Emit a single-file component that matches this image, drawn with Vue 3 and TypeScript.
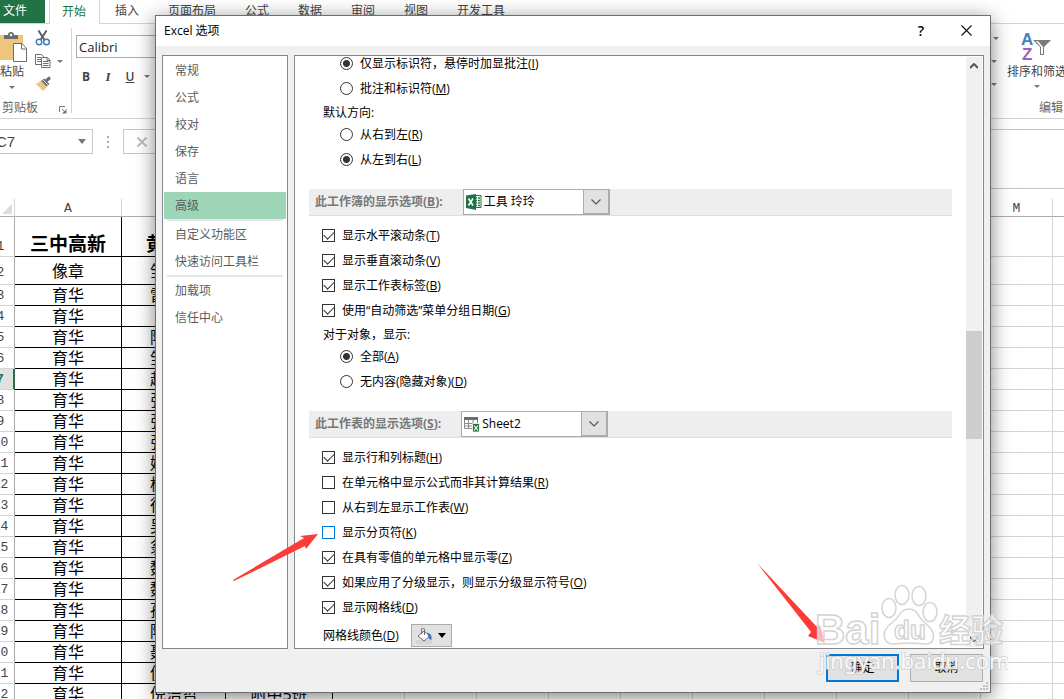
<script setup lang="ts">
import { ref } from 'vue'

interface Option {
  text: string
  hotkey: string
  checked: boolean
  focused?: boolean
}

interface SheetRow {
  n: number
  a: string
  b: string
  c: string
}

const tabs: string[] = ['插入', '页面布局', '公式', '数据', '审阅', '视图', '开发工具']

const navGroups: string[][] = [
  ['常规', '公式', '校对', '保存', '语言', '高级'],
  ['自定义功能区', '快速访问工具栏'],
  ['加载项', '信任中心'],
]
const activeNav = ref('高级')

const commentOptions: Option[] = [
  { text: '仅显示标识符，悬停时加显批注', hotkey: 'I', checked: true },
  { text: '批注和标识符', hotkey: 'M', checked: false },
]
const directionOptions: Option[] = [
  { text: '从右到左', hotkey: 'R', checked: false },
  { text: '从左到右', hotkey: 'L', checked: true },
]
const objectOptions: Option[] = [
  { text: '全部', hotkey: 'A', checked: true },
  { text: '无内容(隐藏对象)', hotkey: 'D', checked: false },
]
const workbookOptions = ref<Option[]>([
  { text: '显示水平滚动条', hotkey: 'T', checked: true },
  { text: '显示垂直滚动条', hotkey: 'V', checked: true },
  { text: '显示工作表标签', hotkey: 'B', checked: true },
  { text: '使用“自动筛选”菜单分组日期', hotkey: 'G', checked: true },
])
const sheetOptions = ref<Option[]>([
  { text: '显示行和列标题', hotkey: 'H', checked: true },
  { text: '在单元格中显示公式而非其计算结果', hotkey: 'R', checked: false },
  { text: '从右到左显示工作表', hotkey: 'W', checked: false },
  { text: '显示分页符', hotkey: 'K', checked: false, focused: true },
  { text: '在具有零值的单元格中显示零', hotkey: 'Z', checked: true },
  { text: '如果应用了分级显示，则显示分级显示符号', hotkey: 'O', checked: true },
  { text: '显示网格线', hotkey: 'D', checked: true },
])

const columns: string[] = ['A', 'B', 'C', 'D', 'E', 'F', 'G', 'H', 'I', 'J', 'K', 'L', 'M', 'N']
const secondColumn: string[] = [
  '黄', '邹', '雷', '', '陈', '邹', '赵', '张', '张', '张', '姚',
  '杨', '徐', '吴', '翁', '魏', '魏', '孙', '陈', '聂', '倪', '倪洁哲',
]
const rows: SheetRow[] = secondColumn.map((b, i) => ({
  n: i + 1,
  a: i === 0 ? '三中高新' : i === 1 ? '像章' : '育华',
  b,
  c: i === 21 ? '附中5班' : '',
}))
</script>

<template>
  <div class="app">
    <header class="tabs">
      <button class="tab file">文件</button>
      <button class="tab current">开始</button>
      <button v-for="t in tabs" :key="t" class="tab">{{ t }}</button>
    </header>

    <section class="ribbon">
      <div class="clipboard">
        <div class="paste">
          <svg width="29" height="32" viewBox="0 0 29 32" aria-hidden="true">
            <rect x="0" y="4" width="23" height="25" fill="#edc57c" />
            <path d="M4 8V4h4a3 3 0 0 1 6 0h4v4z" fill="#6d6d6d" />
            <circle cx="11" cy="4" r="1.2" fill="#fff" />
            <path d="M13.500 12.500h8.500l4.500 5v13h-13z" fill="#fff" stroke="#6d6d6d" />
            <path d="M21.500 12.500v5.500h5" fill="none" stroke="#6d6d6d" />
          </svg>
          <span class="big-label">粘贴</span>
          <i class="caret"></i>
        </div>
        <div class="small-tools">
          <svg width="16" height="16" viewBox="0 0 16 16" aria-hidden="true">
            <path d="M3.500.500 9.500 10M11.500.500 5.500 10" stroke="#5f5f5f" stroke-width="2" fill="none" />
            <circle cx="4" cy="12" r="2.800" fill="#fff" stroke="#3f78b5" stroke-width="1.400" />
            <circle cx="11.500" cy="12" r="2.800" fill="#fff" stroke="#3f78b5" stroke-width="1.400" />
          </svg>
          <span class="copy">
            <svg width="16" height="16" viewBox="0 0 16 16" aria-hidden="true">
              <path d="M.500 1.500h6l2 2v8h-8z" fill="#fff" stroke="#6d6d6d" />
              <path d="M2 4.500h4M2 6.500h4M2 8.500h4" stroke="#3f78b5" />
              <path d="M6.500 4.500h6l2.500 2.500v7.500h-8.500z" fill="#fff" stroke="#6d6d6d" />
              <path d="M12 4.500v3h3M8 8.500h5.500M8 10.500h5.500M8 12.500h5.500" stroke="#3f78b5" fill="none" />
            </svg>
            <i class="caret"></i>
          </span>
          <svg width="17" height="16" viewBox="0 0 17 16" aria-hidden="true">
            <path d="M1 8 6 5l6 6-4 4z" fill="#edc57c" />
            <path d="M6 5l3-2.500 5.500 5.500-3 2.500z" fill="#6d6d6d" />
            <path d="m11 5 4-3.500" stroke="#6d6d6d" stroke-width="3" />
            <path d="m7.500 3.500 6 6" stroke="#fff" stroke-width=".800" />
          </svg>
        </div>
        <span class="group-name">剪贴板</span>
        <svg class="launcher" width="8" height="8" viewBox="0 0 8 8" aria-hidden="true">
          <path d="M.500 6V.500H6M3 3l3 3" fill="none" stroke="#777" />
          <path d="M7.500 3v4.500H3z" fill="#777" />
        </svg>
      </div>

      <div class="font-group">
        <input class="font-name" type="text" value="Calibri" aria-label="字体" />
        <div class="styles">
          <button><b>B</b></button>
          <button class="italic"><i>I</i></button>
          <button class="under"><u>U</u></button>
          <i class="caret"></i>
        </div>
      </div>

      <div class="editing">
        <div class="edit-carets"><i class="caret"></i><i class="caret"></i><i class="caret"></i></div>
        <div class="sort">
          <svg width="32" height="30" viewBox="0 0 32 30" aria-hidden="true">
            <text x="0" y="13" class="icon-a">A</text>
            <text x="1" y="28" class="icon-z">Z</text>
            <path d="M12 8h18l-7 7v8h-4v-8z" fill="#7a7a7a" />
            <path d="M15 9h2l5 6v7h-2v-7z" fill="#fff" />
          </svg>
          <span class="big-label">排序和筛选</span>
          <i class="caret"></i>
          <span class="edit-name">编辑</span>
        </div>
      </div>
    </section>

    <section class="formula-bar">
      <div class="name-box"><span>C7</span><i class="caret wide"></i></div>
      <div class="dots"><i></i><i></i><i></i></div>
      <div class="fx">
        <svg width="12" height="12" viewBox="0 0 12 12" aria-hidden="true">
          <path d="m1.500 1.500 9 9m0-9-9 9" stroke="#bdbdbd" stroke-width="2" />
        </svg>
      </div>
      <input class="formula" type="text" aria-label="编辑栏" />
    </section>

    <table class="sheet">
      <colgroup>
        <col class="w-head" />
        <col class="w-a" />
        <col class="w-b" />
        <col class="w-a" />
        <col v-for="c in columns.slice(3)" :key="c" class="w-rest" />
      </colgroup>
      <thead>
        <tr>
          <th class="corner">
            <svg width="10" height="10" viewBox="0 0 10 10" aria-hidden="true"><path d="M10 0v10H0z" fill="#dcdcdc" /></svg>
          </th>
          <th v-for="c in columns" :key="c">{{ c }}</th>
        </tr>
      </thead>
      <tbody>
        <tr v-for="r in rows" :key="r.n" :class="{ title: r.n === 1, second: r.n === 2, chosen: r.n === 7 }">
          <th>{{ r.n }}</th>
          <td class="ink">{{ r.a }}</td>
          <td class="ink name">{{ r.b }}</td>
          <td class="ink">{{ r.c }}</td>
          <td v-for="c in columns.slice(3)" :key="c"></td>
        </tr>
      </tbody>
    </table>

    <main class="dialog" role="dialog" aria-labelledby="dlg-title">
      <div class="title-bar">
        <h1 id="dlg-title">Excel 选项</h1>
        <button class="help" aria-label="帮助">?</button>
        <button class="close" aria-label="关闭">
          <svg width="11" height="11" viewBox="0 0 11 11"><path d="m.500.500 10 10m0-10-10 10" stroke="#111" stroke-width="1.100" /></svg>
        </button>
      </div>

      <div class="panes">
        <nav class="nav">
          <div v-for="(g, gi) in navGroups" :key="gi" class="nav-group">
            <button v-for="n in g" :key="n" :class="{ active: n === activeNav }" @click="activeNav = n">{{ n }}</button>
          </div>
        </nav>

        <div class="panel">
          <div class="content">
            <div class="first">
              <label v-for="o in commentOptions" :key="o.text" class="row indent">
                <input type="radio" name="comment" :checked="o.checked" /><span>{{ o.text }}(<u>{{ o.hotkey }}</u>)</span>
              </label>
              <p class="caption">默认方向:</p>
              <label v-for="o in directionOptions" :key="o.text" class="row indent">
                <input type="radio" name="direction" :checked="o.checked" /><span>{{ o.text }}(<u>{{ o.hotkey }}</u>)</span>
              </label>
            </div>

            <div class="bar">
              <label for="book">此工作簿的显示选项(<u>B</u>):</label>
              <div class="combo">
                <svg width="18" height="18" viewBox="0 0 18 18" aria-hidden="true">
                  <path d="M9 2.500h7v12H9z" fill="#fff" stroke="#217346" />
                  <path d="M10 5h2M13 5h2M10 7.500h2M13 7.500h2M10 10h2M13 10h2M10 12.500h2M13 12.500h2" stroke="#217346" stroke-width="1.300" />
                  <path d="M1 2.500 11 1v16L1 15z" fill="#217346" />
                  <path d="m3.500 5.500 4.500 7M8 5.500l-4.500 7" stroke="#fff" stroke-width="1.600" />
                </svg>
                <select id="book"><option>工具 玲玲</option></select>
                <span class="drop"><svg width="10" height="6" viewBox="0 0 10 6"><path d="m.500.500 4.500 4.500L9.500.500" fill="none" stroke="#555" stroke-width="1.200" /></svg></span>
              </div>
            </div>

            <div class="group">
              <label v-for="o in workbookOptions" :key="o.text" class="row">
                <input v-model="o.checked" type="checkbox" /><span>{{ o.text }}(<u>{{ o.hotkey }}</u>)</span>
              </label>
              <p class="caption">对于对象，显示:</p>
              <label v-for="o in objectOptions" :key="o.text" class="row indent">
                <input type="radio" name="objects" :checked="o.checked" /><span>{{ o.text }}(<u>{{ o.hotkey }}</u>)</span>
              </label>
            </div>

            <div class="bar">
              <label for="sheet">此工作表的显示选项(<u>S</u>):</label>
              <div class="combo">
                <svg width="18" height="18" viewBox="0 0 18 18" aria-hidden="true">
                  <path d="M1.500 2.500h13v11h-13z" fill="#fff" stroke="#8a8a8a" />
                  <path d="M1 2h14v3H1z" fill="#6d6d6d" />
                  <path d="M1 8.500h14M1 11h14M5.500 5v9M10 5v9" stroke="#8a8a8a" fill="none" />
                  <path d="M9.500 8.500h7v8.500h-7z" fill="#217346" stroke="#fff" stroke-width=".800" />
                  <path d="m11 10.500 4 5m0-5-4 5" stroke="#fff" stroke-width="1.200" />
                </svg>
                <select id="sheet"><option>Sheet2</option></select>
                <span class="drop"><svg width="10" height="6" viewBox="0 0 10 6"><path d="m.500.500 4.500 4.500L9.500.500" fill="none" stroke="#555" stroke-width="1.200" /></svg></span>
              </div>
            </div>

            <div class="group last">
              <label v-for="o in sheetOptions" :key="o.text" class="row">
                <input v-model="o.checked" type="checkbox" :class="{ focused: o.focused }" /><span>{{ o.text }}(<u>{{ o.hotkey }}</u>)</span>
              </label>
              <div class="color-row">
                <label for="grid-color">网格线颜色(<u>D</u>)</label>
                <button id="grid-color" class="color-button">
                  <svg width="17" height="16" viewBox="0 0 17 16" aria-hidden="true">
                    <path d="M0 12h16v4H0z" fill="#d6d6d6" />
                    <path d="m8 3 6 5-6 5-6-5z" fill="#fff" stroke="#6d6d6d" />
                    <path d="M5.500 6V1.500a1.500 1.500 0 0 1 3 0V7" fill="none" stroke="#6d6d6d" />
                    <path d="M11 5c4 0 5 3 4.500 7l-2.500-1z" fill="#3f78b5" />
                  </svg>
                  <i class="caret black"></i>
                </button>
              </div>
            </div>
          </div>
          <div class="scrollbar">
            <button aria-label="向上"><svg width="8" height="6" viewBox="0 0 8 6"><path d="m0 5 4-4 4 4" fill="none" stroke="#555" stroke-width="2" /></svg></button>
            <div class="thumb"></div>
            <button class="down" aria-label="向下"><svg width="8" height="6" viewBox="0 0 8 6"><path d="m0 1 4 4 4-4" fill="none" stroke="#444" stroke-width="2" /></svg></button>
          </div>
        </div>
      </div>

      <footer class="actions">
        <button class="ok">确定</button>
        <button>取消</button>
      </footer>
      <svg class="grip" width="8" height="8" viewBox="0 0 8 8" aria-hidden="true">
        <path d="M6 0h2v2H6zM3 3h2v2H3zM6 3h2v2H6zM0 6h2v2H0zM3 6h2v2H3zM6 6h2v2H6z" fill="#bdbdbd" />
      </svg>
    </main>

    <svg class="arrow arrow-check" width="86" height="50" viewBox="0 0 86 50" aria-hidden="true">
      <path d="M85 2 67 4l4 2L0 48l1 1 71-35 1 3z" fill="#fc3c39" />
    </svg>
    <svg class="arrow arrow-ok" width="70" height="82" viewBox="0 0 70 82" aria-hidden="true">
      <path d="M0 0 60 64l3-2 5 18-17-7 3-4z" fill="#fc3c39" />
    </svg>

    <svg class="watermark" width="192" height="94" viewBox="0 0 192 94" aria-hidden="true">
      <g class="mark">
        <text x="-1" y="61" class="wm-latin">Bai</text>
        <ellipse cx="73" cy="25" rx="7" ry="9.500" />
        <ellipse cx="86" cy="12" rx="7" ry="9.500" />
        <ellipse cx="103" cy="13" rx="7" ry="9.500" />
        <ellipse cx="114" cy="29" rx="7" ry="9.500" />
        <path d="M93 26c-9 0-10 9-16 13-7 5-11 10-8 17 3 8 13 4 25 4s21 4 23-4c2-7-3-12-9-17-6-4-6-13-15-13z" />
        <text x="78" y="56" class="wm-du">du</text>
        <text x="123" y="59" class="wm-han">经验</text>
      </g>
      <text x="3" y="86" class="wm-url">jingyan.baidu.com</text>
    </svg>
  </div>
</template>

<style>
body {
  margin: 0;
  background: #fff;
}
</style>

<style scoped>
.app {
  position: relative;
  height: 100vh;
  overflow: hidden;
  background: #fff;
  color: #444;
  font: 12px/16px "Open Sans", "Noto Sans CJK SC", sans-serif;
}
.app * {
  box-sizing: border-box;
}
button, input, select {
  margin: 0;
  padding: 0;
  border: 0;
  background: none;
  color: inherit;
  font: inherit;
}
svg {
  display: block;
  flex: none;
}
.caret {
  flex: none;
  width: 0;
  height: 0;
  border: 3px solid transparent;
  border-top-color: #777;
  border-bottom: 0;
}
.caret.wide {
  border-width: 5px 4px 0;
}
.caret.black {
  border-width: 5px 4px 0;
  border-top-color: #000;
}

/* Ribbon */
.tabs {
  display: flex;
  height: 24px;
  border-bottom: 1px solid #d4d4d4;
}
.tab {
  padding: 0 14px 1px 15px;
}
.tab.file {
  width: 45px;
  margin-right: 4px;
  padding: 0 15px 1px 0;
  background: #217346;
  color: #fff;
}
.tab.current {
  width: 51px;
  height: 24px;
  border: solid #d4d4d4;
  border-width: 0 1px;
  padding: 0 1px 1px 0;
  background: #fff;
  color: #217346;
}
.ribbon {
  display: flex;
  height: 95px;
  border-bottom: 1px solid #d4d4d4;
}
.clipboard {
  display: grid;
  grid-template: 70px 16px / 30px 1fr auto;
  width: 72px;
  margin: 4px 0 5px;
  border-right: 1px solid #d4d4d4;
}
.paste, .sort {
  display: flex;
  flex-direction: column;
  align-items: center;
}
.paste {
  align-items: flex-start;
  padding-top: 3px;
}
.big-label {
  margin-top: 1px;
  white-space: nowrap;
}
.paste .caret {
  margin: 6px 0 0 9px;
}
.small-tools {
  display: flex;
  flex-direction: column;
  gap: 7px;
  grid-column: 2 / 4;
  padding: 2px 0 0 5px;
}
.copy {
  display: flex;
  align-items: center;
  gap: 6px;
}
.group-name, .edit-name {
  color: #666;
}
.group-name {
  grid-column: 1 / 3;
  padding-left: 2px;
  line-height: 20px;
}
.launcher {
  align-self: center;
  margin: 8px 4px 0 0;
}
.font-group {
  width: 180px;
  padding: 11px 4px;
}
.font-name {
  width: 120px;
  height: 23px;
  border: 1px solid #ababab;
  padding-left: 2px;
  color: #222;
  font-size: 13px;
}
.styles {
  display: flex;
  align-items: center;
  gap: 2px;
  height: 37px;
}
.styles button {
  width: 20px;
}
.styles .caret {
  margin-left: 2px;
}
.under {
  font-weight: 600;
}
.italic {
  font-family: "Liberation Serif", serif;
  font-size: 13px;
  font-weight: bold;
}
.editing {
  display: flex;
  width: 74px;
  margin-left: auto;
}
.edit-carets {
  display: flex;
  flex-direction: column;
  gap: 20px;
  padding: 13px 8px 0 1px;
}
.edit-carets .caret:first-child {
  margin-left: 2px;
}
.sort {
  width: 64px;
  padding-top: 8px;
}
.sort .big-label {
  margin-top: 2px;
}
.sort .caret {
  margin: 5px 0 12px;
}
.edit-name {
  align-self: flex-end;
  padding-right: 4px;
}
.icon-a, .icon-z {
  font: bold 17px "Liberation Sans", sans-serif;
  fill: #4580bd;
}
.icon-z {
  fill: #9a63b8;
}

/* Formula bar */
.formula-bar {
  display: flex;
  align-items: flex-start;
  height: 80px;
  padding-top: 10px;
}
.name-box {
  display: flex;
  align-items: center;
  justify-content: space-between;
  width: 93px;
  height: 25px;
  border: 1px solid #c6c6c6;
  border-left: 0;
  padding-right: 6px;
}
.name-box span {
  margin-left: -4px;
  font: 15px "Liberation Sans", sans-serif;
}
.dots {
  display: grid;
  gap: 3px;
  width: 30px;
  padding: 7px 14px;
}
.dots i {
  width: 2px;
  height: 2px;
  background: #aaa;
}
.fx {
  display: flex;
  align-items: center;
  width: 100px;
  height: 25px;
  border: 1px solid #c6c6c6;
  padding-left: 12px;
}
.formula {
  flex: 1;
  height: 60px;
  margin-left: 6px;
  border: 1px solid #c6c6c6;
  border-right: 0;
}

/* Worksheet */
.sheet {
  width: 1138px;
  margin-left: -13px;
  border-collapse: separate;
  border-spacing: 0;
  table-layout: fixed;
}
.w-head { width: 28px; }
.w-a { width: 107px; }
.w-b { width: 104px; }
.w-rest { width: 72px; }
.sheet th, .sheet td {
  overflow: hidden;
  padding: 0;
  border: solid #d4d4d4;
  border-width: 0 1px 1px 0;
  white-space: nowrap;
}
.sheet th {
  color: #444;
  font: 13px/14px "Liberation Mono", monospace;
}
.sheet thead th {
  height: 18px;
  padding-top: 3px;
  border-bottom-color: #ababab;
}
.corner svg {
  margin-left: 15px;
}
.sheet tbody th {
  padding-bottom: 2px;
  border-right-color: #ababab;
  vertical-align: bottom;
}
.sheet td {
  height: 21px;
  color: #000;
  font-size: 16px;
  line-height: 20px;
  text-align: center;
}
.sheet .ink {
  border-color: #000;
}
.sheet .name {
  padding-left: 28px;
  text-align: left;
}
.sheet .title td {
  height: 40px;
  font-size: 19px;
  font-weight: bold;
  line-height: 24px;
  vertical-align: bottom;
}
.sheet .title .name {
  padding-left: 24px;
}
.sheet .second td {
  height: 28px;
}
.sheet .second th {
  padding-bottom: 4px;
}
.sheet .chosen th {
  border-right: 2px solid #217346;
  background: #e1e1e1;
  color: #217346;
  font-weight: bold;
}

/* Dialog */
.dialog {
  position: absolute;
  inset: 15px 73px 6px 155px;
  display: flex;
  flex-direction: column;
  border: 1px solid #6e6e6e;
  background: #f0f0f0;
  color: #000;
  box-shadow: 0 4px 18px rgba(0, 0, 0, 0.5);
}
.title-bar {
  display: flex;
  align-items: center;
  height: 30px;
  padding: 0 18px 1px 8px;
  background: #fff;
}
.title-bar h1 {
  flex: 1;
  margin: 0;
  font-size: 12px;
  font-weight: normal;
}
.help {
  width: 16px;
  margin-right: 32px;
  font-size: 14px;
  font-weight: 600;
}
.panes {
  display: flex;
  flex: 1;
  gap: 6px;
  min-height: 0;
  padding: 9px 6px 0;
}
.nav {
  width: 126px;
  border: 1px solid #828790;
  padding: 1px;
  background: #fff;
}
.nav-group + .nav-group::before {
  display: block;
  height: 2px;
  margin: 0 3px;
  background: #e5e5e5;
  content: "";
}
.nav button {
  display: block;
  width: 100%;
  height: 27px;
  padding-left: 11px;
  color: #5c5c5c;
  text-align: left;
}
.nav .active {
  background: #9fd5b7;
}
.panel {
  display: flex;
  flex: 1;
  border: 1px solid #828790;
  padding-right: 1px;
  background: #fff;
}
.content {
  flex: 1;
  overflow: hidden;
  padding: 0 14px;
}
.first {
  margin: -5px 0 17px;
  padding-left: 13px;
}
.group {
  padding: 7px 0 17px 13px;
}
.group.last {
  padding-bottom: 0;
}
.row {
  display: flex;
  align-items: center;
  gap: 7px;
  height: 25px;
}
.row.indent {
  padding-left: 18px;
}
.caption {
  height: 21px;
  margin: 0;
  padding: 4px 0 0 1px;
}
.row input {
  flex: none;
  width: 13px;
  height: 13px;
  border: 1px solid #333;
  background: #fff;
  appearance: none;
}
.row input[type="radio"] {
  border-radius: 50%;
}
.row input[type="radio"]:checked {
  background: radial-gradient(circle, #333 3px, #fff 4px);
}
.row input[type="checkbox"] {
  display: grid;
  place-items: center;
}
.row input[type="checkbox"]:checked::before {
  width: 9px;
  height: 5px;
  margin-bottom: 3px;
  border: solid #333;
  border-width: 0 0 1px 1px;
  transform: rotate(-45deg);
  content: "";
}
.row input.focused {
  border-color: #0078d7;
}
.bar {
  display: flex;
  align-items: center;
  gap: 20px;
  height: 27px;
  border-bottom: 1px solid #dedede;
  padding-left: 6px;
  background: #eee;
}
.bar label {
  color: #777;
  font-weight: bold;
}
.combo {
  display: flex;
  align-items: center;
  width: 147px;
  height: 26px;
  border: 1px solid #ababab;
  padding-left: 1px;
  background: #fff;
}
.combo select {
  flex: 1;
  min-width: 0;
  padding-left: 1px;
  appearance: none;
}
.drop {
  display: grid;
  place-items: center;
  width: 26px;
  height: 24px;
  border: 1px solid #ababab;
  border-top-width: 0;
  background: #e1e1e1;
}
.color-row {
  display: flex;
  align-items: flex-start;
  gap: 12px;
  padding: 4px 0 0 1px;
  line-height: 23px;
}
.color-button {
  display: flex;
  align-items: center;
  gap: 5px;
  width: 41px;
  height: 23px;
  border: 1px solid #ababab;
  padding-left: 4px;
  background: #e1e1e1;
}
.scrollbar {
  display: grid;
  grid-template-rows: 17px 257fr 107fr 191fr 17px;
  width: 16px;
  margin: 1px 0;
  background: #f0f0f0;
}
.scrollbar button {
  display: grid;
  place-items: center;
}
.thumb {
  grid-row: 3;
  background: #cdcdcd;
}
.down {
  grid-row: 5;
}
.actions {
  display: flex;
  justify-content: flex-end;
  gap: 11px;
  padding: 5px 7px 10px;
}
.actions button {
  width: 73px;
  height: 28px;
  border: 1px solid #adadad;
  background: #e1e1e1;
}
.actions .ok {
  border: 2px solid #0078d7;
}
.grip {
  position: absolute;
  right: 2px;
  bottom: 2px;
}

/* Annotations over the page */
.arrow, .watermark {
  position: absolute;
  pointer-events: none;
}
.arrow-check {
  top: 532px;
  left: 233px;
}
.arrow-ok {
  right: 237px;
  bottom: 54px;
}
.watermark {
  right: 56px;
  bottom: 22px;
}
.mark {
  fill: rgba(255, 255, 255, 0.65);
  stroke: #d4d4d4;
  stroke-width: 1.5;
}
.wm-latin {
  font: bold 42px "Liberation Sans", sans-serif;
}
.wm-du {
  font: bold 26px "Liberation Sans", sans-serif;
}
.wm-han {
  font: bold 32px "Noto Sans CJK SC", sans-serif;
}
.wm-url {
  fill: rgba(255, 255, 255, 0.85);
  stroke: rgba(200, 200, 200, 0.6);
  stroke-width: 2;
  paint-order: stroke;
  font: 22px "Noto Sans", sans-serif;
}
</style>
